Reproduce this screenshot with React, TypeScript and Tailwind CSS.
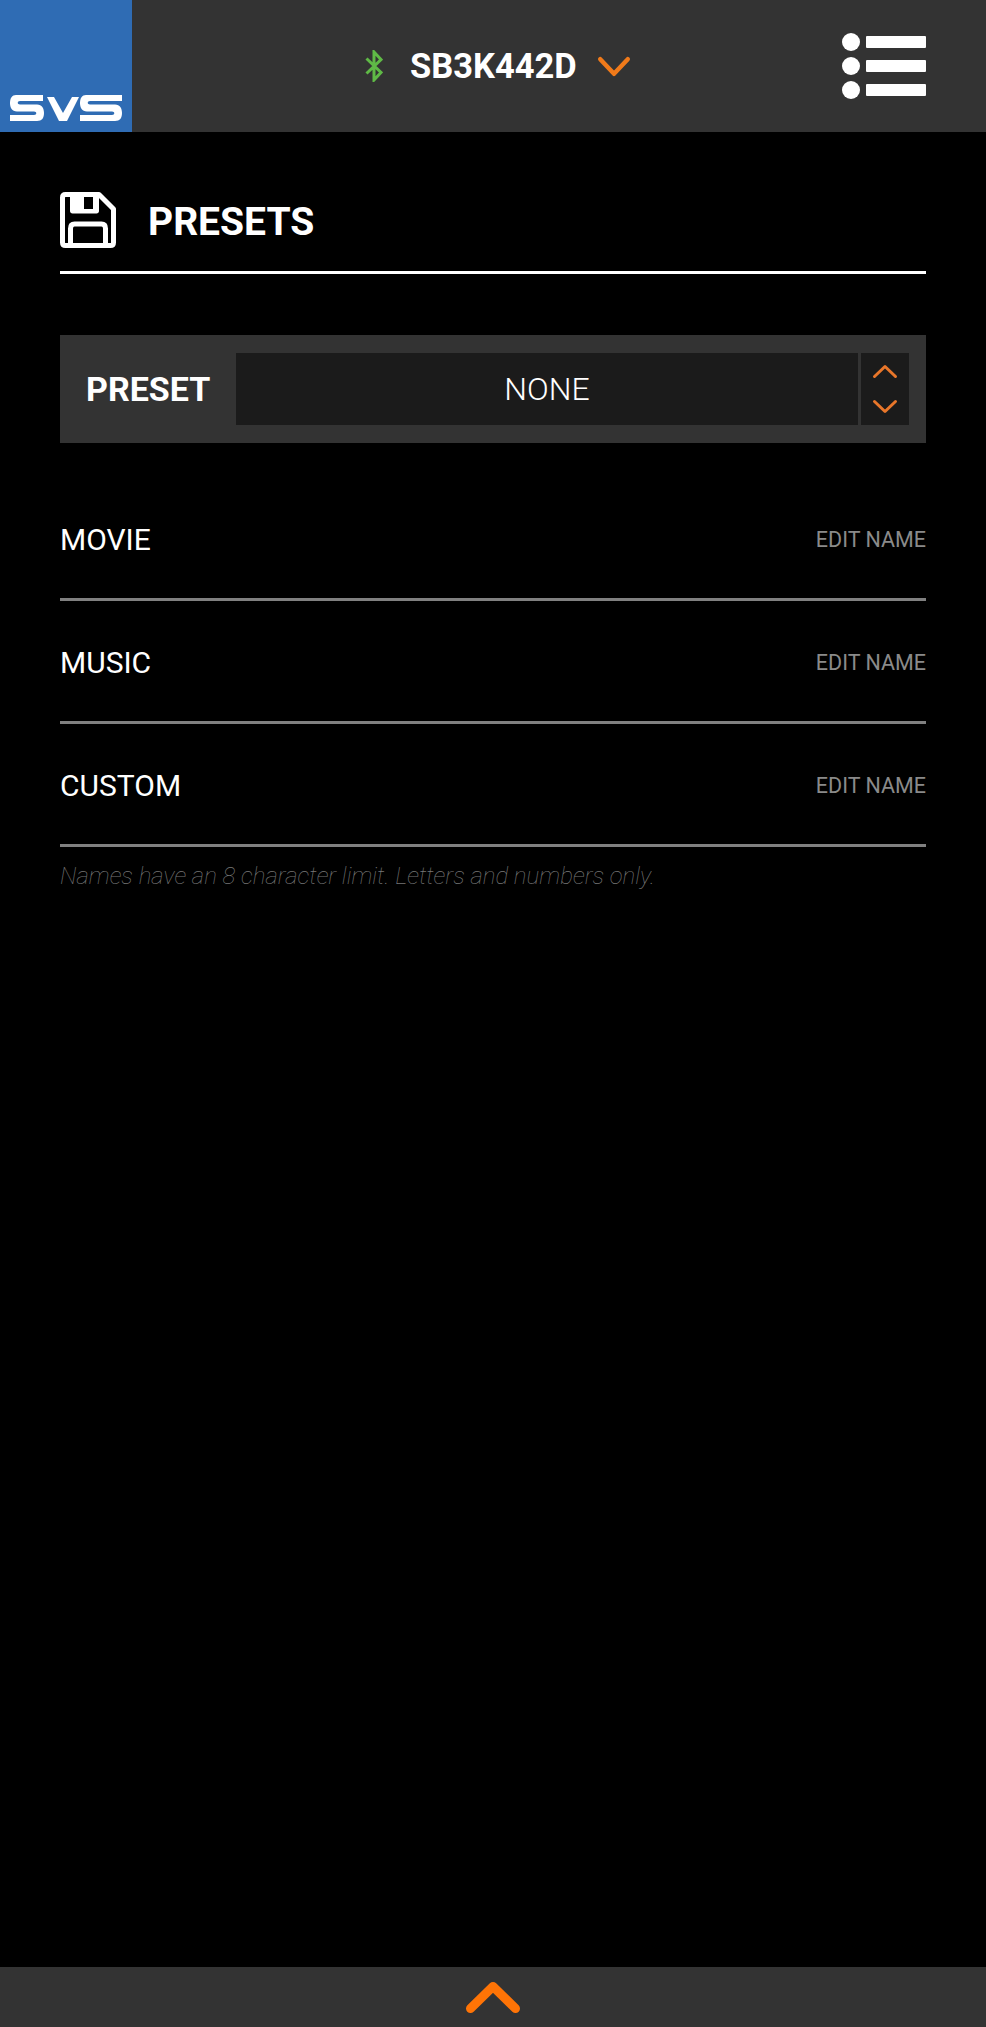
import React from "react";

const presets = ["MOVIE", "MUSIC", "CUSTOM"];

function SvsLogo() {
  return (
    <svg width="112" height="26" viewBox="0 0 112 26" fill="white">
      <path d="M6 0H33V6H10C7 6 7 9.500 10 9.500H27C32 10 34 13 34 18C34 23 32 26 27 26H0V20H24C27 20 27 16.500 24 16.500H7C2 16 0 13 0 8C0 3 2 0 6 0Z" />
      <path d="M37 2H44L53 18L62 2H69L57 26H49Z" />
      <path d="M76 0H112V6H80C77 6 77 9.500 80 9.500H105C110 10 112 13 112 18C112 23 110 26 105 26H70V20H102C105 20 105 16.500 102 16.500H77C72 16 70 13 70 8C70 3 72 0 76 0Z" />
    </svg>
  );
}

function MenuIcon() {
  return (
    <svg width="84" height="66" viewBox="0 0 84 66" fill="white">
      <circle cx="9" cy="9" r="9" />
      <circle cx="9" cy="33" r="9" />
      <circle cx="9" cy="57" r="9" />
      <rect x="24" y="3" width="60" height="12" rx="1" />
      <rect x="24" y="27" width="60" height="12" rx="1" />
      <rect x="24" y="51" width="60" height="12" rx="1" />
    </svg>
  );
}

function SaveIcon() {
  return (
    <svg width="56" height="56" viewBox="0 0 56 56" fill="none">
      <path d="M2.500 5.500C2.500 3.500 3.500 2.500 5.500 2.500H39L53.500 17V50.500C53.500 52.500 52.500 53.500 50.500 53.500H5.500C3.500 53.500 2.500 52.500 2.500 50.500Z" stroke="white" strokeWidth="5" strokeLinejoin="round" />
      <path d="M10 2H39V19C39 20.500 38 21.500 36.500 21.500H12.500C11 21.500 10 20.500 10 19Z" fill="white" />
      <rect x="24" y="5" width="9" height="12" fill="black" />
      <path d="M10.500 54V36.500C10.500 33.500 12 32 14.500 32H41.500C44 32 45.500 33.500 45.500 36.500V54" stroke="white" strokeWidth="5" />
    </svg>
  );
}

function Chevron({ up, w, h, sw, color }: { up?: boolean; w: number; h: number; sw: number; color: string }) {
  const pad = sw / 2 + 1;
  const d = up
    ? `M${pad} ${h - pad}L${w / 2} ${pad}L${w - pad} ${h - pad}`
    : `M${pad} ${pad}L${w / 2} ${h - pad}L${w - pad} ${pad}`;
  return (
    <svg width={w} height={h} viewBox={`0 0 ${w} ${h}`} fill="none">
      <path d={d} stroke={color} strokeWidth={sw} strokeLinecap="round" strokeLinejoin="round" />
    </svg>
  );
}

function BluetoothIcon() {
  return (
    <svg width="18" height="32" viewBox="0 0 18 32" fill="none">
      <path d="M1.500 8.500L16 22.500L9 30V2L16 9.500L1.500 23.500" stroke="#5fb946" strokeWidth="3" />
    </svg>
  );
}

export default function App() {
  return (
    <div className="flex flex-col min-h-[2027px] bg-black text-white font-['Roboto',sans-serif]">
      {/* Header */}
      <header className="flex items-stretch h-[132px] bg-[#333333] shrink-0">
        <div className="w-[132px] bg-[#2f6cb4] flex items-end pl-[10px] pb-[11px]">
          <SvsLogo />
        </div>
        <div className="flex-1 flex items-center justify-between pl-[233px] pr-[60px]">
          <div className="flex items-center">
            <BluetoothIcon />
            <span className="ml-[27px] text-[34.500px] font-bold leading-none">SB3K442D</span>
            <span className="ml-[20px]">
              <Chevron w={34} h={21} sw={4.500} color="#f07a1a" />
            </span>
          </div>
          <MenuIcon />
        </div>
      </header>

      <main className="flex-1 px-[60px]">
        {/* Title */}
        <div className="flex items-center h-[142px] pt-[60px] pb-[24px] border-b-[3px] border-white">
          <SaveIcon />
          <h1 className="ml-[32px] mt-[6px] text-[39px] font-bold leading-none">PRESETS</h1>
        </div>

        {/* Preset selector */}
        <div className="mt-[61px] h-[108px] bg-[#333333] flex items-center pl-[26px] pr-[17px]">
          <span className="w-[150px] text-[34px] font-bold leading-none">PRESET</span>
          <div className="flex-1 h-[72px] bg-[#1b1b1b] flex items-center justify-center text-[32px] font-light">
            NONE
          </div>
          <div className="ml-[3px] w-[48px] h-[72px] bg-[#1b1b1b] flex flex-col items-center justify-center gap-[20px]">
            <Chevron up w={26} h={15} sw={3} color="#e8762a" />
            <Chevron w={26} h={15} sw={3} color="#e8762a" />
          </div>
        </div>

        {/* Named presets */}
        <div className="mt-[35px]">
          {presets.map((name) => (
            <div key={name} className="flex items-center justify-between h-[123px] pt-[3px] border-b-[3px] border-[#808080]">
              <span className="text-[30px] leading-none">{name}</span>
              <span className="mt-[1px] text-[21.500px] leading-none text-[#8a8a8a]">EDIT NAME</span>
            </div>
          ))}
        </div>
        <p className="mt-[14px] text-[24px] font-thin italic leading-[30px] text-[#777777]">
          Names have an 8 character limit. Letters and numbers only.
        </p>
      </main>

      {/* Bottom bar */}
      <footer className="h-[60px] bg-[#333333] shrink-0 flex justify-center pt-[14px]">
        <span>
          <Chevron up w={56} h={33} sw={9} color="#ff7406" />
        </span>
      </footer>
    </div>
  );
}
